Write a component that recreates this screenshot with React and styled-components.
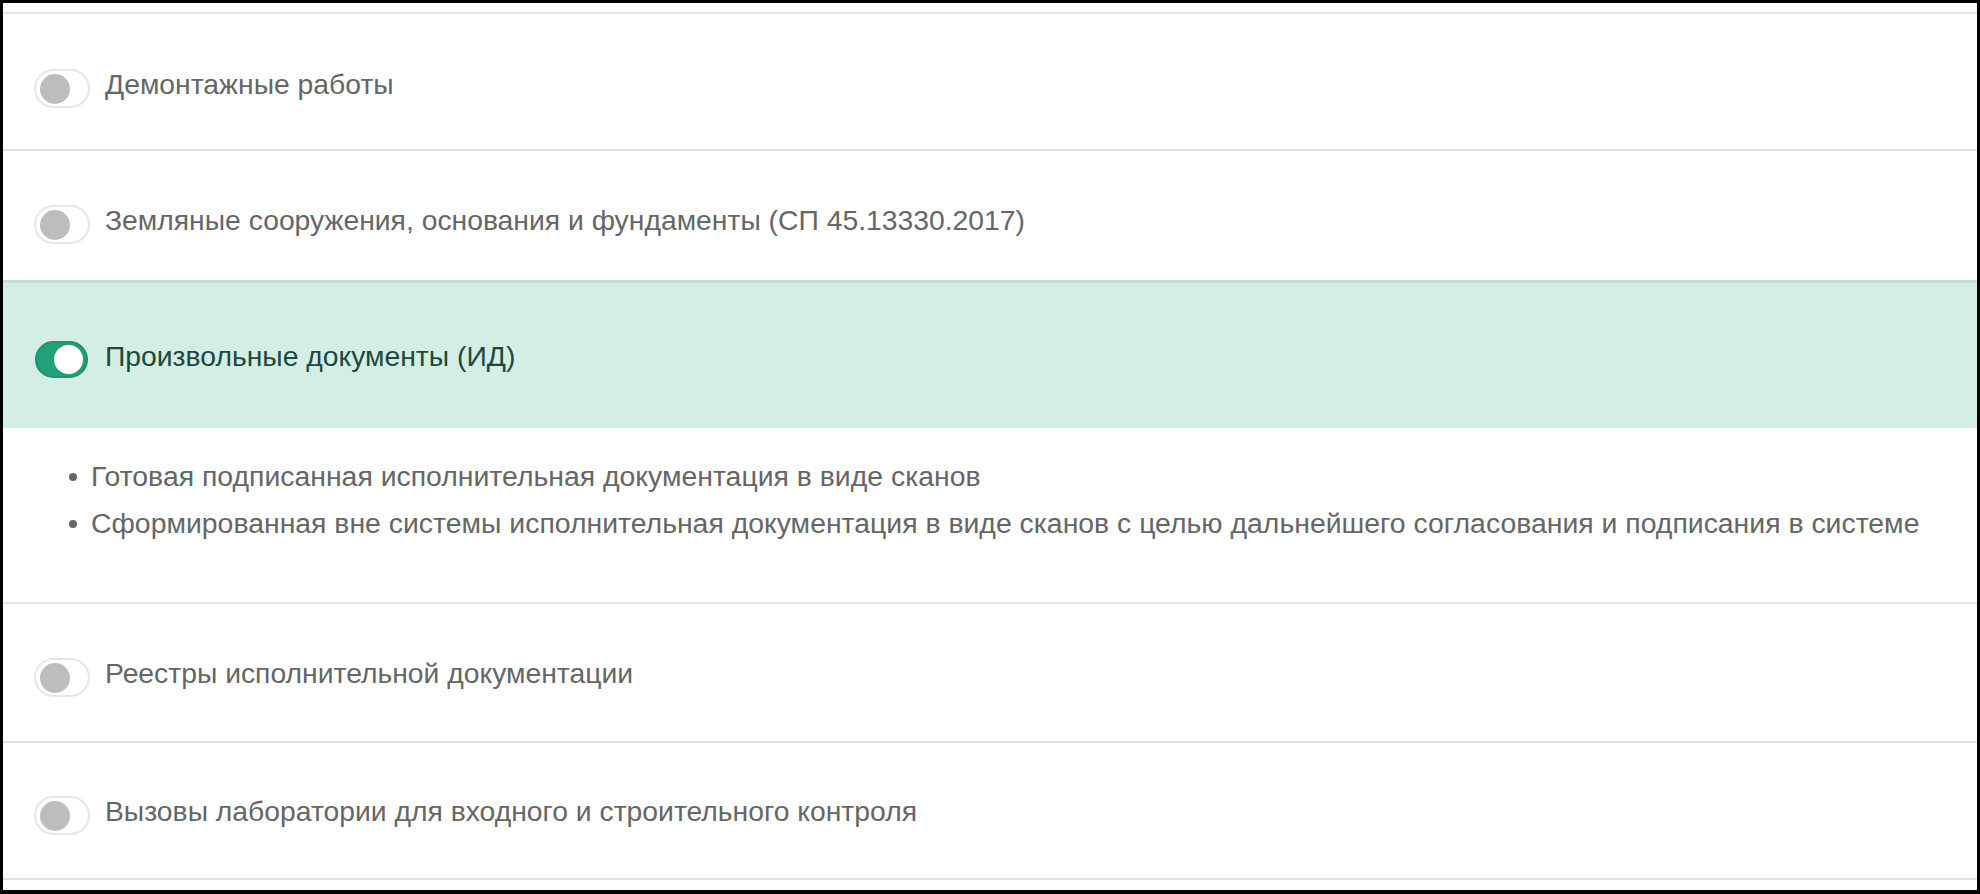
import styled, { createGlobalStyle } from 'styled-components';

const GlobalStyle = createGlobalStyle`
  body {
    margin: 0;
    background: #000;
    font-family: 'Liberation Sans', Arial, Helvetica, sans-serif;
  }
`;

const Panel = styled.div`
  margin: 3px 3px 0;
  height: 887px;
  box-sizing: border-box;
  padding-top: 9px;
  background: #fff;
`;

const Row = styled.div`
  display: flex;
  align-items: flex-start;
  gap: 15px;
  box-sizing: border-box;
  height: ${(p) => p.$h}px;
  padding: ${(p) => p.$top}px 0 0 31px;
  border-top: ${(p) => (p.$on ? '3px solid #bfe2d6' : '2px solid #e3e3e3')};
  background: ${(p) => (p.$on ? '#d4ede5' : '#fff')};
  border-bottom: ${(p) => (p.$last ? '2px solid #e3e3e3' : 'none')};
`;

const Toggle = styled.span`
  display: flex;
  flex: none;
  align-items: center;
  justify-content: ${(p) => (p.$on ? 'flex-end' : 'flex-start')};
  box-sizing: border-box;
  width: ${(p) => (p.$on ? 53 : 56)}px;
  height: ${(p) => (p.$on ? 37 : 39)}px;
  margin: 0 ${(p) => (p.$on ? 2 : 0)}px 0 ${(p) => (p.$on ? 1 : 0)}px;
  padding: 0 ${(p) => (p.$on ? 3 : 4)}px;
  border-radius: 20px;
  border: 2px solid ${(p) => (p.$on ? '#1a9370' : '#e6e6e6')};
  background: ${(p) => (p.$on ? '#21a07a' : '#fff')};
`;

const Knob = styled.span`
  display: block;
  width: ${(p) => (p.$on ? 29 : 30)}px;
  height: ${(p) => (p.$on ? 29 : 30)}px;
  border-radius: 50%;
  background: ${(p) => (p.$on ? '#fff' : '#bdbdbd')};
`;

const Title = styled.span`
  font-size: 28.3px;
  line-height: 39px;
  margin-top: -4px;
  color: ${(p) => (p.$on ? '#1b4a3d' : '#666')};
`;

const Details = styled.ul`
  margin: 0;
  box-sizing: border-box;
  height: 174px;
  padding: 25px 0 0 88px;
  font-size: 28.4px;
  line-height: 47px;
  color: #666;
  list-style: none;
`;

const Item = styled.li`
  position: relative;

  &::before {
    content: '';
    position: absolute;
    left: -22px;
    top: 20px;
    width: 8px;
    height: 8px;
    border-radius: 50%;
    background: #666;
  }
`;

const sections = [
  { title: 'Демонтажные работы', h: 137, top: 55 },
  { title: 'Земляные сооружения, основания и фундаменты (СП 45.13330.2017)', h: 131, top: 54 },
  {
    title: 'Произвольные документы (ИД)',
    h: 148,
    top: 58,
    on: true,
    items: [
      'Готовая подписанная исполнительная документация в виде сканов',
      'Сформированная вне системы исполнительная документация в виде сканов с целью дальнейшего согласования и подписания в системе',
    ],
  },
  { title: 'Реестры исполнительной документации', h: 139, top: 54 },
  { title: 'Вызовы лаборатории для входного и строительного контроля', h: 137, top: 53, last: true },
];

const App = () => {
  return (
    <>
      <GlobalStyle />
      <Panel>
        {sections.map((s) => (
          <div key={s.title}>
            <Row $h={s.last ? s.h + 2 : s.h} $top={s.top} $on={s.on} $last={s.last}>
              <Toggle $on={s.on}>
                <Knob $on={s.on} />
              </Toggle>
              <Title $on={s.on}>{s.title}</Title>
            </Row>
            {s.items && (
              <Details>
                {s.items.map((it) => (
                  <Item key={it}>{it}</Item>
                ))}
              </Details>
            )}
          </div>
        ))}
      </Panel>
    </>
  );
};

export default App;
